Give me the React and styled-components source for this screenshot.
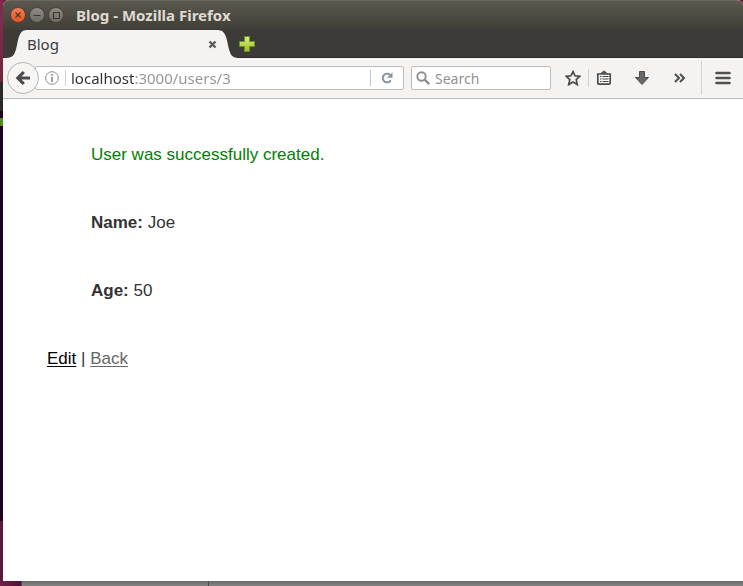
import React from "react";
import styled, { createGlobalStyle } from "styled-components";

const GlobalStyle = createGlobalStyle`
  * { box-sizing: border-box; }
  body { margin: 0; }
  button, input { font: inherit; color: inherit; }
`;

const uiFont = `"Noto Sans", "Open Sans", sans-serif`;

const Desktop = styled.div`
  display: grid;
  grid-template-columns: 3px minmax(0, 1fr);
  grid-template-rows: minmax(0, 1fr) 5px;
  min-height: 100vh;
  background: #6b1d42;
`;

const Launcher = styled.div`
  background: linear-gradient(
    #812a4d 0 20px, #71243f 82px, #2b2a29 82px 111px, #200220 111px 118px,
    #4e8c22 118px 126px, #200220 126px 521px, #5c1a3b 521px
  );
`;

const Shelf = styled.div`
  grid-column: 1 / -1;
  display: flex;
  background: linear-gradient(90deg, #6e2148, #4c1432 21px);
  padding-left: 21px;
`;

const ShelfPane = styled.div`
  flex: ${(p) => p.$flex};
  border-left: 1px solid #4c4c4c;
  background: linear-gradient(#686868, #858585);
`;

const BrowserWindow = styled.div`
  display: flex;
  flex-direction: column;
  min-width: 0;
  border-radius: 6px 6px 0 0;
  overflow: hidden;
  background: #ffffff;
  font-family: ${uiFont};
`;

const TitleBar = styled.header`
  display: flex;
  align-items: center;
  height: 30px;
  padding: 0 7px 2px;
  border-top: 1px solid #6a675c;
  background: linear-gradient(#5b584d, #3f3e38);
`;

const WindowButtons = styled.div`
  display: flex;
  gap: 3px;
`;

const WindowButton = styled.button`
  display: flex;
  width: 16px;
  height: 16px;
  padding: 0;
  border: 0;
  background: none;
`;

const WindowTitle = styled.h1`
  margin: 0 0 0 12px;
  color: #dfdbd2;
  font-size: 15px;
  line-height: 20px;
  font-weight: 700;
`;

const TabStrip = styled.div`
  display: flex;
  height: 28px;
  padding-left: 2px;
  background: #3c3b37;
  box-shadow: inset 0 -1px #2b2a26;
`;

const TabEdge = styled.svg`
  flex: none;
  width: 22px;
  height: 28px;
  fill: #f4f3f2;
`;

const Tab = styled.div`
  display: flex;
  align-items: center;
  justify-content: space-between;
  width: 190px;
  background: #f4f3f2;
  color: #3c3c3c;
  font-size: 15px;
  line-height: 20px;
`;

const IconButton = styled.button`
  display: flex;
  flex: none;
  align-items: center;
  justify-content: center;
  width: ${(p) => p.$width}px;
  height: ${(p) => p.$height || 24}px;
  padding: 0;
  border: 0;
  background: none;
`;

const Toolbar = styled.nav`
  display: flex;
  align-items: center;
  height: 41px;
  padding: 0 7px 0 4px;
  border-bottom: 1px solid #bebcba;
  background: #f4f3f2;
`;

const BackButton = styled.button`
  display: flex;
  flex: none;
  align-items: center;
  justify-content: center;
  width: 32px;
  height: 32px;
  padding: 0;
  border: 1px solid #b9b7b4;
  border-radius: 50%;
  background: #f7f6f5;
  z-index: 1;
`;

const Field = styled.label`
  display: flex;
  align-items: center;
  min-width: 0;
  height: 24px;
  border: 1px solid #bfbdba;
  border-radius: 2px;
  background: #ffffff;
  font-size: 14px;
`;

const AddressField = styled(Field)`
  flex: 1 1 366px;
  margin-left: -4px;
  padding-left: 8px;
  font-size: 15px;
`;

const SearchField = styled(Field)`
  flex: 0 1 140px;
  margin: 0 9px 0 7px;
  padding-left: 4px;
  gap: 5px;
`;

const TextInput = styled.input`
  flex: 1;
  min-width: 0;
  height: 22px;
  padding: 0;
  border: 0;
  outline: 0;
  background: none;
  &::placeholder { color: #929292; opacity: 1; }
`;

const AddressInput = styled(TextInput)`
  background: linear-gradient(90deg, #303030 64px, #929292 64px);
  background-clip: text;
  -webkit-text-fill-color: transparent;
`;

const Rule = styled.span`
  flex: none;
  width: 1px;
  height: ${(p) => p.$height}px;
  margin: 0 ${(p) => p.$after || 0}px 0 ${(p) => p.$before || 0}px;
  background: ${(p) => p.$color || "#d3d1cf"};
`;

const Page = styled.main`
  flex: 1;
  padding: 39px 44px;
  color: #333333;
  font-family: "Liberation Sans", Arial, sans-serif;
  font-size: 17px;
  line-height: 34px;
`;

const Paragraph = styled.p`
  margin: 0 44px 34px;
  color: ${(p) => (p.$notice ? "#008000" : "inherit")};
`;

const PageLink = styled.a`
  color: ${(p) => p.$color};
  text-decoration-thickness: 1px;
  text-underline-offset: 2px;
`;

const WindowIcon = ({ fill, stroke, children }) => (
  <svg width="16" height="16" viewBox="0 0 16 16" aria-hidden="true">
    <defs>
      <linearGradient id={`glow-${fill.slice(1)}`} x2="0" y2="1">
        <stop stopColor={fill} />
        <stop offset="1" stopColor={stroke} />
      </linearGradient>
    </defs>
    <circle cx="8" cy="8" r="7.5" fill={`url(#glow-${fill.slice(1)})`} stroke="#3d3b35" strokeWidth=".8" />
    <g fill="none" stroke="#42362f" strokeWidth="1.2">{children}</g>
  </svg>
);

export default function App() {
  return (
    <>
      <GlobalStyle />
      <Desktop>
        <Launcher />
        <BrowserWindow>
          <TitleBar>
            <WindowButtons>
              <WindowButton aria-label="Close window">
                <WindowIcon fill="#f68056" stroke="#e8511f"><path d="m5.5 5.5 5 5m0-5-5 5" /></WindowIcon>
              </WindowButton>
              <WindowButton aria-label="Minimize">
                <WindowIcon fill="#8f8d84" stroke="#6d6b64"><path d="M4.5 8.5h7" /></WindowIcon>
              </WindowButton>
              <WindowButton aria-label="Maximize">
                <WindowIcon fill="#8f8d83" stroke="#6d6b64"><path d="M5.5 5.5h6v6h-6z" /></WindowIcon>
              </WindowButton>
            </WindowButtons>
            <WindowTitle>Blog - Mozilla Firefox</WindowTitle>
          </TitleBar>

          <TabStrip>
            <TabEdge viewBox="0 0 22 28" aria-hidden="true">
              <path d="M0 28C9 28 10 24 12 15C14 4 16 0 22 0V28Z" />
            </TabEdge>
            <Tab>
              <span>Blog</span>
              <IconButton $width={9} aria-label="Close tab">
                <svg width="9" height="9" viewBox="0 0 9 9"><path d="m1.5 1.5 6 6m0-6-6 6" stroke="#5b5b5b" strokeWidth="2.4" /></svg>
              </IconButton>
            </Tab>
            <TabEdge viewBox="0 0 22 28" aria-hidden="true">
              <path d="M22 28C14 28 13 24 11 15C9 4 7 0 0 0V28Z" />
            </TabEdge>
            <IconButton $width={16} $height={28} aria-label="New tab">
              <svg width="16" height="16" viewBox="0 0 16 16">
                <defs>
                  <linearGradient id="plus" x2="0" y2="1"><stop stopColor="#dced77" /><stop offset="1" stopColor="#9fbd24" /></linearGradient>
                </defs>
                <path d="M5.5.5h5v5h5v5h-5v5h-5v-5h-5v-5h5z" fill="url(#plus)" stroke="#65902a" />
              </svg>
            </IconButton>
          </TabStrip>

          <Toolbar>
            <BackButton aria-label="Back">
              <svg width="16" height="16" viewBox="0 0 16 16" fill="none" stroke="#4a4a4a" strokeWidth="3.2">
                <path d="M8.8 2 2.9 8l5.9 6M3 8h12" />
              </svg>
            </BackButton>
            <AddressField>
              <IconButton $width={16} aria-label="Site information">
                <svg width="14" height="14" viewBox="0 0 14 14">
                  <circle cx="7" cy="7" r="6.3" fill="none" stroke="#8f8f8f" />
                  <path d="M7 3v1.8M7 6v5" stroke="#858585" strokeWidth="1.6" />
                </svg>
              </IconButton>
              <Rule $height={16} $before={5} $after={5} />
              <AddressInput aria-label="Address" defaultValue="localhost:3000/users/3" />
              <Rule $height={16} $color="#bfc7ce" />
              <IconButton $width={32} aria-label="Reload">
                <svg width="12" height="12" viewBox="0 0 12 12">
                  <path d="M9 2.9A4.3 4.3 0 1 0 9.8 8.2" fill="none" stroke="#8795a3" strokeWidth="2" />
                  <path d="M11.5.3v5.5H6z" fill="#8795a3" />
                </svg>
              </IconButton>
            </AddressField>
            <SearchField>
              <svg width="14" height="14" viewBox="0 0 14 14" fill="none" stroke="#8f8f8f" aria-hidden="true">
                <circle cx="5.5" cy="5.5" r="4.2" strokeWidth="1.9" />
                <path d="m8.6 8.6 4.6 4.6" strokeWidth="2.4" />
              </svg>
              <TextInput aria-label="Search" placeholder="Search" />
            </SearchField>
            <IconButton $width={26} aria-label="Bookmark this page">
              <svg width="16" height="16" viewBox="0 0 16 16">
                <path d="m8 1.6 2 4.2 4.8.5-3.6 3.3 1.1 5L8 12.1l-4.3 2.5 1.1-5L1.2 6.3 6 5.8z" fill="none" stroke="#4c4c4c" strokeWidth="1.7" />
              </svg>
            </IconButton>
            <Rule $height={18} $before={2} $after={2} />
            <IconButton $width={26} aria-label="Bookmarks">
              <svg width="16" height="16" viewBox="0 0 16 16" fill="none" stroke="#4c4c4c">
                <path d="M1.8 4h12.4v8.9q0 1.3-1.3 1.3H3.1q-1.3 0-1.3-1.3z" strokeWidth="1.7" />
                <path d="M4.5 3.5 8 .8l3.5 2.7z" fill="#4c4c4c" strokeWidth=".6" />
                <path d="M4 6.5h1.5m1 0H12.5M4 9h1.5m1 0h6M4 11.5h1.5m1 0h6" strokeWidth="1.2" />
              </svg>
            </IconButton>
            <IconButton $width={50} aria-label="Downloads">
              <svg width="16" height="16" viewBox="0 0 16 16">
                <path d="M5.5 1.5h5v6h4L8 14.5 1.5 7.5h4z" fill="#686868" stroke="#4c4c4c" />
              </svg>
            </IconButton>
            <IconButton $width={26} aria-label="More tools">
              <svg width="12" height="10" viewBox="0 0 12 10">
                <path d="m1 1 4 4-4 4m5-8 4 4-4 4" fill="none" stroke="#4c4c4c" strokeWidth="2" />
              </svg>
            </IconButton>
            <Rule $height={34} $before={8} $after={8} />
            <IconButton $width={26} aria-label="Open menu">
              <svg width="16" height="14" viewBox="0 0 16 14">
                <path d="M1.5 2h13M1.5 7h13M1.5 12h13" stroke="#505050" strokeWidth="2.6" strokeLinecap="round" />
              </svg>
            </IconButton>
          </Toolbar>

          <Page>
            <Paragraph $notice>User was successfully created.</Paragraph>
            <Paragraph><strong>Name:</strong> Joe</Paragraph>
            <Paragraph><strong>Age:</strong> 50</Paragraph>
            <PageLink href="#edit" $color="#000000">Edit</PageLink> |{" "}
            <PageLink href="#back" $color="#666666">Back</PageLink>
          </Page>
        </BrowserWindow>
        <Shelf>
          <ShelfPane $flex="0 0 187px" />
          <ShelfPane $flex="1" />
        </Shelf>
      </Desktop>
    </>
  );
}
